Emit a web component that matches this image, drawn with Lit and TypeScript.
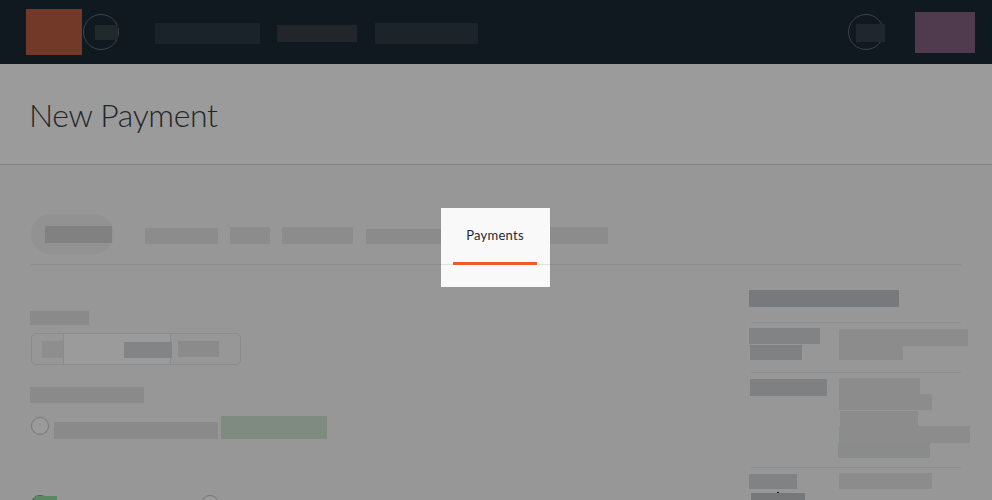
import { LitElement, html, css } from "lit";
import { customElement, property } from "lit/decorators.js";

// width, height, left margin, top margin, tone
type Bar = [number, number, number, number, string];

@customElement("skeleton-bar")
class SkeletonBar extends LitElement {
  @property({ attribute: false }) bar: Bar = [0, 0, 0, 0, "#8c8c8c"];
  static styles = css`
    :host { display: block; flex: none; }
    .bar { box-sizing: border-box; }
  `;
  render() {
    const [w, h, l, t, c] = this.bar;
    return html`<div class="bar" style="width:${w}px;height:${h}px;margin:${t}px 0 0 ${l}px;background:${c}"></div>`;
  }
}

const bar = (w: number, h: number, l: number, t: number, c = "#8c8c8c") =>
  html`<skeleton-bar .bar=${[w, h, l, t, c] as Bar}></skeleton-bar>`;

@customElement("app-root")
class AppRoot extends LitElement {
  static styles = css`
    :host {
      display: block; width: 992px; height: 500px; overflow: hidden;
      background: #979797; font-family: Lato, "Liberation Sans", sans-serif;
    }
    * { box-sizing: border-box; }
    .top { display: flex; align-items: flex-start; height: 64px; background: #10191f; }
    .ring { position: relative; flex: none; width: 36px; height: 36px; border: 1px solid #3f4345; border-radius: 50%; margin: 14px 0 0 1px; }
    .ring.user { margin-left: 370px; }
    .over { position: absolute; left: 11px; top: 10px; }
    .user .over { left: 7px; top: 9px; }
    .title { height: 101px; background: #9b9b9b; border-bottom: 1px solid #858585; }
    h1 { margin: 0; padding: 31px 0 0 29px; font-size: 32px; line-height: 40px; font-weight: 300; letter-spacing: -0.37px; color: #222629; white-space: nowrap; }
    .tabs { position: relative; display: flex; align-items: flex-start; height: 122px; }
    .pill { flex: none; width: 83px; height: 40px; margin: 49px 0 0 31px; border-radius: 20px; background: #929292; }
    .rule { position: absolute; left: 31px; top: 99px; width: 930px; height: 1px; background: #8b8b8b; }
    .spot { position: relative; flex: none; width: 109px; height: 79px; margin-top: 43px; background: #f9f9f9; text-align: center; font-size: 13px; line-height: 20px; letter-spacing: 0.25px; color: #1a2833; padding-top: 17px; padding-right: 1px; }
    .spot::before { content: ""; position: absolute; left: 0; right: 0; top: 56px; height: 1px; background: #e4e4e5; }
    .spot::after { content: ""; position: absolute; left: 12px; width: 84px; top: 54px; height: 3px; background: #f05a28; }
    .body { display: flex; align-items: flex-start; }
    .form { width: 749px; flex: none; padding-top: 24px; }
    .row { display: flex; align-items: flex-start; }
    .input { display: flex; align-items: flex-start; width: 210px; height: 32px; margin: 8px 0 0 31px; border: 1px solid #8b8b8b; border-radius: 5px; }
    .field { position: relative; width: 108px; height: 30px; background: #9b9b9b; border: solid #8b8b8b; border-width: 0 1px; }
    .field .value { position: absolute; left: 60px; top: 8px; }
    .radio { flex: none; width: 18px; height: 18px; border: 1px solid #74777b; border-radius: 50%; background: #9a9a9a; }
    .radio.a { margin: 14px 0 0 31px; }
    .options { margin-top: 56px; height: 5px; overflow: hidden; }
    .radio.on { position: relative; margin-left: 31px; background: #326c40; border-color: #326c40; }
    .mark { position: absolute; left: 2px; top: 0; width: 23px; height: 20px; background: #5a8862; border-top-left-radius: 3px; }
    .radio.off { margin-left: 152px; }
    .side { width: 243px; flex: none; padding-top: 3px; }
    .pair { display: flex; width: 243px; align-items: flex-start; position: relative; }
    .pair::before { content: ""; position: absolute; left: 2px; top: 0; width: 210px; height: 1px; background: #8d8d8d; }
    .p1 { height: 50px; margin-top: 15px; }
    .p2 { height: 95px; }
    .p3 { height: 33px; }
    .key { width: 89px; flex: none; display: flex; flex-direction: column; position: relative; }
    .val { display: flex; flex-direction: column; }
    .dot { position: absolute; left: 28px; top: 25px; width: 2px; height: 1px; background: #111; }
  `;

  render() {
    return html`
      <header class="top">
        ${bar(56, 46, 26, 9, "#733928")}
        <div class="ring"><div class="over">${bar(23, 15, 0, 0, "#22292c")}</div></div>
        ${bar(105, 21, 36, 23, "#1b232a")}
        ${bar(80, 17, 17, 25, "#222529")}
        ${bar(103, 21, 18, 23, "#1c2429")}
        <div class="ring user"><div class="over">${bar(29, 18, 0, 0, "#1f272c")}</div></div>
        ${bar(60, 41, 31, 12, "#503a4d")}
      </header>
      <section class="title"><h1>New Payment</h1></section>
      <nav class="tabs">
        <div class="rule"></div>
        <div class="pill">${bar(67, 17, 14, 12, "#818181")}</div>
        ${bar(73, 16, 31, 63)} ${bar(40, 17, 12, 62)}
        ${bar(71, 17, 12, 62)} ${bar(75, 15, 13, 64, "#8b8b8b")}
        <div class="spot">Payments</div>
        ${bar(58, 17, 0, 62)}
      </nav>
      <main class="body">
        <section class="form">
          ${bar(59, 14, 30, 0, "#8a8a8a")}
          <div class="input">
            ${bar(21, 17, 10, 7, "#8e8e8e")}
            <div class="field"><div class="value">${bar(48, 16, 0, 0, "#828485")}</div></div>
            ${bar(41, 16, 7, 7, "#8b8b8b")}
          </div>
          ${bar(114, 16, 30, 22, "#8a8a8a")}
          <div class="row">
            <div class="radio a"></div>
            ${bar(164, 17, 5, 19, "#8a8a8a")}
            ${bar(106, 23, 3, 13, "#7f8b81")}
          </div>
          <div class="row options">
            <div class="radio on"><div class="mark"></div></div>
            <div class="radio off"></div>
          </div>
        </section>
        <aside class="side">
          ${bar(150, 17, 0, 0, "#77797b")}
          <div class="pair p1">
            <div class="key">${bar(71, 16, 0, 6, "#828385")}${bar(52, 15, 1, 1, "#7f8183")}</div>
            <div class="val">${bar(129, 17, 1, 7)}${bar(64, 14, 1, 0)}</div>
          </div>
          <div class="pair p2">
            <div class="key">${bar(77, 17, 1, 7, "#7e8082")}</div>
            <div class="val">
              ${bar(81, 16, 1, 6)}${bar(93, 16, 1, 0)}${bar(78, 15, 2, 1)}
              ${bar(131, 17, 1, 0)}${bar(92, 15, 0, 0, "#898c8a")}
            </div>
          </div>
          <div class="pair p3">
            <div class="key">${bar(48, 15, 0, 7, "#808284")}${bar(54, 12, 2, 4, "#777879")}<div class="dot"></div></div>
            <div class="val">${bar(93, 16, 1, 6)}</div>
          </div>
        </aside>
      </main>
    `;
  }
}
